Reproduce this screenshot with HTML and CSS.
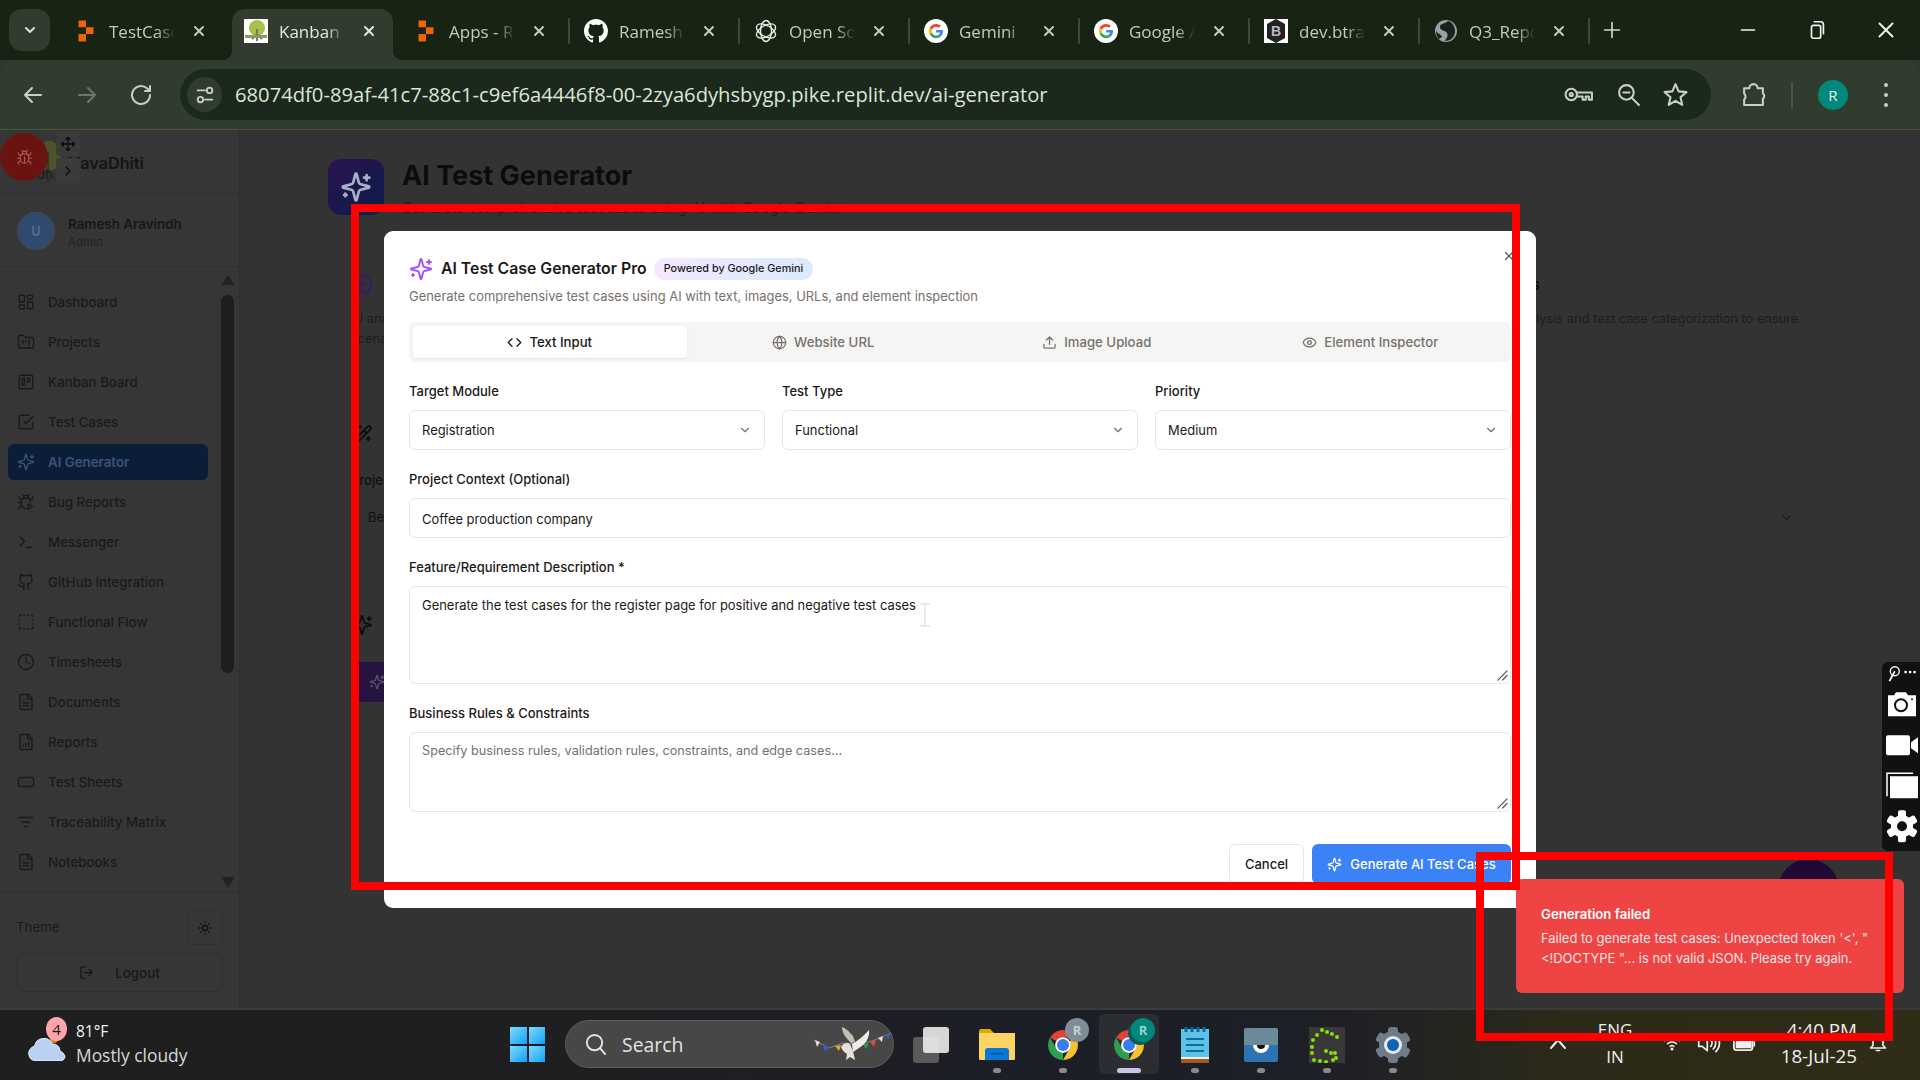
FILE: index.html
```html
<!DOCTYPE html>
<html lang="en">
<head>
    <meta charset="UTF-8">
    <title>AI Test Generator</title>
    <link rel="stylesheet" href="styles.css">
</head>
<body>
    <!-- icon sprite -->
    <svg class="sprite" xmlns="http://www.w3.org/2000/svg">
        <symbol id="i-sparkles" viewBox="0 0 24 24"><path d="M9.937 15.5A2 2 0 0 0 8.5 14.063l-6.135-1.582a.5.5 0 0 1 0-.962L8.5 9.936A2 2 0 0 0 9.937 8.5l1.582-6.135a.5.5 0 0 1 .963 0L14.063 8.5A2 2 0 0 0 15.5 9.937l6.135 1.581a.5.5 0 0 1 0 .964L15.5 14.063a2 2 0 0 0-1.437 1.437l-1.582 6.135a.5.5 0 0 1-.963 0z"/><path d="M20 3v4M22 5h-4M4 17v2M5 18H3"/></symbol>
        <symbol id="i-code" viewBox="0 0 24 24"><path d="m16 18 6-6-6-6M8 6l-6 6 6 6"/></symbol>
        <symbol id="i-globe" viewBox="0 0 24 24"><circle cx="12" cy="12" r="10"/><path d="M12 2a14.5 14.5 0 0 0 0 20 14.5 14.5 0 0 0 0-20M2 12h20"/></symbol>
        <symbol id="i-upload" viewBox="0 0 24 24"><path d="M21 15v4a2 2 0 0 1-2 2H5a2 2 0 0 1-2-2v-4M17 8l-5-5-5 5M12 3v12"/></symbol>
        <symbol id="i-eye" viewBox="0 0 24 24"><path d="M2.062 12.348a1 1 0 0 1 0-.696 10.75 10.75 0 0 1 19.876 0 1 1 0 0 1 0 .696 10.75 10.75 0 0 1-19.876 0"/><circle cx="12" cy="12" r="3"/></symbol>
        <symbol id="i-chevron" viewBox="0 0 24 24"><path d="m6 9 6 6 6-6"/></symbol>
        <symbol id="i-x" viewBox="0 0 24 24"><path d="M18 6 6 18M6 6l12 12"/></symbol>
        <symbol id="i-dashboard" viewBox="0 0 24 24"><rect x="3" y="3" width="7" height="9" rx="1"/><rect x="14" y="3" width="7" height="5" rx="1"/><rect x="14" y="12" width="7" height="9" rx="1"/><rect x="3" y="16" width="7" height="5" rx="1"/></symbol>
        <symbol id="i-folder" viewBox="0 0 24 24"><path d="M4 20h16a2 2 0 0 0 2-2V8a2 2 0 0 0-2-2h-7.93a2 2 0 0 1-1.66-.9l-.82-1.2A2 2 0 0 0 7.93 3H4a2 2 0 0 0-2 2v13c0 1.1.9 2 2 2Z"/><path d="M8 10v4M12 10v2M16 10v6"/></symbol>
        <symbol id="i-kanban" viewBox="0 0 24 24"><rect x="3" y="3" width="18" height="18" rx="2"/><rect x="7" y="7" width="3" height="9"/><rect x="14" y="7" width="3" height="5"/></symbol>
        <symbol id="i-check" viewBox="0 0 24 24"><path d="m9 11 3 3L22 4M21 12v7a2 2 0 0 1-2 2H5a2 2 0 0 1-2-2V5a2 2 0 0 1 2-2h11"/></symbol>
        <symbol id="i-bug" viewBox="0 0 24 24"><path d="m8 2 1.88 1.88M14.12 3.88 16 2M9 7.13v-1a3.003 3.003 0 1 1 6 0v1M12 20c-3.3 0-6-2.7-6-6v-3a4 4 0 0 1 4-4h4a4 4 0 0 1 4 4v3c0 3.3-2.7 6-6 6M12 20v-9M6.53 9C4.6 8.8 3 7.1 3 5M6 13H2M3 21c0-2.1 1.7-3.9 3.8-4M20.97 5c0 2.1-1.6 3.8-3.5 4M22 13h-4M17.2 17c2.1.1 3.8 1.9 3.8 4"/></symbol>
        <symbol id="i-bugplay" viewBox="0 0 24 24"><path d="M12.8 20.8A6 6 0 0 1 6 15v-4a4 4 0 0 1 4-4h4a4 4 0 0 1 4 4v1M8 2l1.88 1.88M14.12 3.88 16 2M9 7.13v-1a3 3 0 1 1 6 0v1M6.53 9C4.6 8.8 3 7.1 3 5M6 13H2M3 21c0-2.1 1.7-3.9 3.8-4M20.97 5c0 2.1-1.6 3.8-3.5 4M15 14.5v7l6-3.5z"/></symbol>
        <symbol id="i-terminal" viewBox="0 0 24 24"><path d="m4 17 6-6-6-6M12 19h8"/></symbol>
        <symbol id="i-github" viewBox="0 0 24 24"><path d="M15 22v-4a4.8 4.8 0 0 0-1-3.5c3 0 6-2 6-5.5.08-1.25-.27-2.48-1-3.5.28-1.15.28-2.35 0-3.5 0 0-1 0-3 1.5-2.64-.5-5.36-.5-8 0C6 2 5 2 5 2c-.3 1.15-.3 2.35 0 3.5A5.403 5.403 0 0 0 4 9c0 3.5 3 5.5 6 5.5-.39.49-.68 1.05-.85 1.65-.17.6-.22 1.23-.15 1.85v4"/><path d="M9 18c-4.51 2-5-2-7-2"/></symbol>
        <symbol id="i-dashed" viewBox="0 0 24 24"><path d="M5 3a2 2 0 0 0-2 2M19 3a2 2 0 0 1 2 2M21 19a2 2 0 0 1-2 2M5 21a2 2 0 0 1-2-2M9 3h1M9 21h1M14 3h1M14 21h1M3 9v1M21 9v1M3 14v1M21 14v1"/></symbol>
        <symbol id="i-clock" viewBox="0 0 24 24"><circle cx="12" cy="12" r="10"/><path d="M12 6v6l4 2"/></symbol>
        <symbol id="i-file" viewBox="0 0 24 24"><path d="M15 2H6a2 2 0 0 0-2 2v16a2 2 0 0 0 2 2h12a2 2 0 0 0 2-2V7Z"/><path d="M14 2v4a2 2 0 0 0 2 2h4M10 9H8M16 13H8M16 17H8"/></symbol>
        <symbol id="i-filechart" viewBox="0 0 24 24"><path d="M15 2H6a2 2 0 0 0-2 2v16a2 2 0 0 0 2 2h12a2 2 0 0 0 2-2V7Z"/><path d="M14 2v4a2 2 0 0 0 2 2h4M8 18v-2M12 18v-4M16 18v-6"/></symbol>
        <symbol id="i-ellipsis" viewBox="0 0 24 24"><rect x="2" y="6" width="20" height="12" rx="2"/><path d="M12 12h.01M17 12h.01M7 12h.01"/></symbol>
        <symbol id="i-filter" viewBox="0 0 24 24"><path d="M3 6h18M7 12h10M10 18h4"/></symbol>
        <symbol id="i-sun" viewBox="0 0 24 24"><circle cx="12" cy="12" r="4"/><path d="M12 3v1M12 20v1M3 12h1M20 12h1M5.6 5.6l.7.7M17.7 17.7l.7.7M5.6 18.4l.7-.7M17.7 6.3l.7-.7"/></symbol>
        <symbol id="i-logout" viewBox="0 0 24 24"><path d="M9 21H5a2 2 0 0 1-2-2V5a2 2 0 0 1 2-2h4M16 17l5-5-5-5M21 12H9"/></symbol>
        <symbol id="i-move" viewBox="0 0 24 24"><path d="M5 9l-3 3 3 3M9 5l3-3 3 3M15 19l-3 3-3-3M19 9l3 3-3 3M2 12h20M12 2v20"/></symbol>
        <symbol id="i-brain" viewBox="0 0 24 24"><path d="M12 5a3 3 0 1 0-5.997.125 4 4 0 0 0-2.526 5.77 4 4 0 0 0 .556 6.588A4 4 0 1 0 12 18ZM12 5a3 3 0 1 1 5.997.125 4 4 0 0 1 2.526 5.77 4 4 0 0 1-.556 6.588A4 4 0 1 1 12 18Z"/><path d="M15 13a4.5 4.5 0 0 1-3-4 4.5 4.5 0 0 1-3 4"/></symbol>
        <symbol id="i-wand" viewBox="0 0 24 24"><path d="m21.64 3.64-1.28-1.28a1.21 1.21 0 0 0-1.72 0L2.36 18.64a1.21 1.21 0 0 0 0 1.72l1.28 1.28a1.2 1.2 0 0 0 1.72 0L21.64 5.36a1.2 1.2 0 0 0 0-1.72M14 7l3 3M5 6v4M19 14v4M10 2v2M7 8H3M21 16h-4M11 3H9"/></symbol>
        <symbol id="i-grip" viewBox="0 0 12 12"><path d="M1 11 11 1M6 11l5-5"/></symbol>
        <symbol id="i-chrome" viewBox="0 0 48 48"><path fill="#db4437" d="M6.68 14A20 20 0 0 1 41.32 14H24a10 10 0 0 0-8.66 5z"/><path fill="#fbc02d" d="M41.32 14A20 20 0 0 1 24 44l8.66-15a10 10 0 0 0 0-10z"/><path fill="#2e9e4f" d="M24 44A20 20 0 0 1 6.68 14l8.66 15A10 10 0 0 0 24 34z"/><circle cx="24" cy="24" r="10.5" fill="#fff"/><circle cx="24" cy="24" r="8" fill="#3b7de8"/></symbol>
        <symbol id="i-google" viewBox="0 0 64 64"><circle cx="32" cy="32" r="32" fill="#fff"/><g transform="translate(13 13) scale(.8)"><path fill="#EA4335" d="M24 9.5c3.54 0 6.71 1.22 9.21 3.6l6.85-6.85C35.9 2.38 30.47 0 24 0 14.62 0 6.51 5.38 2.56 13.22l7.98 6.19C12.43 13.72 17.74 9.5 24 9.5z"/><path fill="#4285F4" d="M46.98 24.55c0-1.57-.15-3.09-.38-4.55H24v9.02h12.94c-.58 2.96-2.26 5.48-4.78 7.18l7.73 6c4.51-4.18 7.09-10.36 7.09-17.65z"/><path fill="#FBBC05" d="M10.53 28.59c-.48-1.45-.76-2.99-.76-4.59s.27-3.14.76-4.59l-7.98-6.19C.92 16.46 0 20.12 0 24c0 3.88.92 7.54 2.56 10.78l7.97-6.19z"/><path fill="#34A853" d="M24 48c6.48 0 11.93-2.13 15.89-5.81l-7.73-6c-2.15 1.45-4.92 2.3-8.16 2.3-6.26 0-11.57-4.22-13.47-9.91l-7.98 6.19C6.51 42.62 14.62 48 24 48z"/></g></symbol>
        <symbol id="i-replit" viewBox="0 0 16 16"><path fill="#f26207" d="M3 1h5v4.5H3zM8 5.5h5V10H8zM3 10h5v5H3z"/></symbol>
    </svg>

    <div class="screen">
        <!-- tab strip -->
        <header class="tabstrip">
            <button class="tab-list"><svg class="ic w3"><use href="#i-chevron"/></svg></button>
            <div class="tabs">
                <div class="tab">
                    <svg class="fav"><use href="#i-replit"/></svg>
                    <span class="tab-title">TestCases</span>
                    <svg class="ic w3 tab-close"><use href="#i-x"/></svg>
                </div>
                <div class="tab active">
                    <svg class="fav" viewBox="0 0 24 24"><rect width="24" height="24" fill="#fff"/><ellipse cx="13" cy="9" rx="8" ry="8" fill="#a9c14a"/><path d="M13 10v12M13 15l-5 5M13 15l5 5" stroke="#777" stroke-width="2"/><rect x="1" y="16" width="22" height="3" fill="#8a9a58"/></svg>
                    <span class="tab-title">Kanban Board</span>
                    <svg class="ic w3 tab-close"><use href="#i-x"/></svg>
                </div>
                <div class="tab">
                    <svg class="fav"><use href="#i-replit"/></svg>
                    <span class="tab-title">Apps - Replit</span>
                    <svg class="ic w3 tab-close"><use href="#i-x"/></svg>
                    <span class="tab-sep"></span>
                </div>
                <div class="tab">
                    <svg class="fav" viewBox="0 0 16 16"><path fill="#fff" d="M8 0C3.58 0 0 3.58 0 8c0 3.54 2.29 6.53 5.47 7.59.4.07.55-.17.55-.38 0-.19-.01-.82-.01-1.49-2.01.37-2.53-.49-2.69-.94-.09-.23-.48-.94-.82-1.13-.28-.15-.68-.52-.01-.53.63-.01 1.08.58 1.23.82.72 1.21 1.87.87 2.33.66.07-.52.28-.87.51-1.07-1.78-.2-3.64-.89-3.64-3.95 0-.87.31-1.59.82-2.15-.08-.2-.36-1.02.08-2.12 0 0 .67-.21 2.2.82.64-.18 1.32-.27 2-.27s1.36.09 2 .27c1.53-1.04 2.2-.82 2.2-.82.44 1.1.16 1.92.08 2.12.51.56.82 1.27.82 2.15 0 3.07-1.87 3.75-3.65 3.95.29.25.54.73.54 1.48 0 1.07-.01 1.93-.01 2.2 0 .21.15.46.55.38A8.013 8.013 0 0 0 16 8c0-4.42-3.58-8-8-8z"/></svg>
                    <span class="tab-title">Ramesh Aravindh</span>
                    <svg class="ic w3 tab-close"><use href="#i-x"/></svg>
                    <span class="tab-sep"></span>
                </div>
                <div class="tab">
                    <svg class="fav" viewBox="0 0 24 24" fill="none" stroke="#e8ebe4" stroke-width="1.4"><ellipse cx="12" cy="12" rx="5.500" ry="10.500"/><ellipse cx="12" cy="12" rx="5.500" ry="10.500" transform="rotate(60 12 12)"/><ellipse cx="12" cy="12" rx="5.500" ry="10.500" transform="rotate(120 12 12)"/></svg>
                    <span class="tab-title">Open Source</span>
                    <svg class="ic w3 tab-close"><use href="#i-x"/></svg>
                    <span class="tab-sep"></span>
                </div>
                <div class="tab">
                    <svg class="fav"><use href="#i-google"/></svg>
                    <span class="tab-title">Gemini</span>
                    <svg class="ic w3 tab-close"><use href="#i-x"/></svg>
                    <span class="tab-sep"></span>
                </div>
                <div class="tab">
                    <svg class="fav"><use href="#i-google"/></svg>
                    <span class="tab-title">Google AI</span>
                    <svg class="ic w3 tab-close"><use href="#i-x"/></svg>
                    <span class="tab-sep"></span>
                </div>
                <div class="tab">
                    <svg class="fav" viewBox="0 0 24 24"><rect width="24" height="24" fill="#fff"/><path fill="#222" d="M12 0l9 5v14l-9 5-9-5V5z"/><text x="12" y="17" text-anchor="middle" font-size="14" font-weight="700" font-family="Liberation Sans" fill="#bbb">B</text></svg>
                    <span class="tab-title">dev.btrak</span>
                    <svg class="ic w3 tab-close"><use href="#i-x"/></svg>
                    <span class="tab-sep"></span>
                </div>
                <div class="tab">
                    <svg class="fav" viewBox="0 0 24 24"><circle cx="12" cy="12" r="11" fill="#9aa0a6"/><path fill="#17241a" d="M14 2c-3 3-8 2-8 6s5 3 7 6-2 7-2 8c6 0 10-4 10-10 0-5-3-9-7-10zM2 12c2 3 5 3 6 6l-3 2c-2-2-3-5-3-8z"/></svg>
                    <span class="tab-title">Q3_Report</span>
                    <svg class="ic w3 tab-close"><use href="#i-x"/></svg>
                    <span class="tab-sep"></span>
                </div>
            </div>
            <svg class="ic new-tab" viewBox="0 0 24 24"><path d="M12 3v18M3 12h18"/></svg>
            <div class="win-controls">
                <span class="win-btn"><svg class="ic win-ic" viewBox="0 0 24 24"><path d="M5 12h14"/></svg></span>
                <span class="win-btn"><svg class="ic win-ic" viewBox="0 0 24 24"><rect x="6" y="7" width="10" height="14" rx="2"/><path d="M9 3h7a3 3 0 0 1 3 3v10"/></svg></span>
                <span class="win-btn"><svg class="ic win-ic x" viewBox="0 0 24 24"><use href="#i-x"/></svg></span>
            </div>
        </header>

        <!-- toolbar -->
        <div class="toolbar">
            <span class="tool-btn"><svg class="ic" viewBox="0 0 24 24"><path d="M20 12H4M11 5l-7 7 7 7"/></svg></span>
            <span class="tool-btn off"><svg class="ic" viewBox="0 0 24 24"><path d="M4 12h16M13 5l7 7-7 7"/></svg></span>
            <span class="tool-btn"><svg class="ic" viewBox="0 0 24 24"><path d="M21 12a9 9 0 1 1-3-6.7L21 8M21 3v5h-5"/></svg></span>
            <div class="omnibox">
                <span class="site-chip"><svg class="ic" viewBox="0 0 24 24"><path d="M4 7h8M12 17h8"/><circle cx="17" cy="7" r="3"/><circle cx="7" cy="17" r="3"/></svg></span>
                <span class="url">68074df0-89af-41c7-88c1-c9ef6a4446f8-00-2zya6dyhsbygp.pike.replit.dev/ai-generator</span>
                <div class="omni-actions">
                    <svg class="ic key" viewBox="0 0 30 24"><circle cx="8" cy="12" r="5.500"/><circle cx="8" cy="12" r="1.500"/><path d="M13.500 10H28v7h-3v-3h-3v3h-3v-3h-5.500"/></svg>
                    <svg class="ic" viewBox="0 0 24 24"><circle cx="10" cy="10" r="7"/><path d="m15 15 7 7M7 10h6"/></svg>
                    <svg class="ic" viewBox="0 0 24 24"><path d="m12 2 3 7 7.500.7-5.700 4.900 1.700 7.400-6.500-3.900-6.500 3.900 1.700-7.400L1.500 9.700 9 9z"/></svg>
                </div>
            </div>
            <svg class="ic ext" viewBox="0 0 24 24"><path d="M3 6h5a4 4 0 0 1 8 0h5v5a3 3 0 0 1 0 5v6H3v-5a4 4 0 0 0 0-6z"/></svg>
            <span class="tool-sep"></span>
            <span class="profile">R</span>
            <span class="dots"><i></i><i></i><i></i></span>
        </div>

        <!-- page behind the dialog -->
        <div class="page">
            <aside class="sidebar">
                <div class="brand">
                    <div class="brand-logo">
                        <svg viewBox="0 0 30 46"><ellipse cx="17" cy="17" rx="12" ry="15" fill="#5c6a22" opacity=".6"/><path d="M16 14v30M16 30l-7 10M16 30l7 10" stroke="#2e2e2e" stroke-width="1.500" fill="none"/></svg>
                        <span class="brand-tag">dh</span>
                    </div>
                    <span class="brand-name">NavaDhiti</span>
                </div>
                <div class="user">
                    <span class="avatar">U</span>
                    <div class="user-text">
                        <div class="user-name">Ramesh Aravindh</div>
                        <div class="user-role">Admin</div>
                    </div>
                </div>
                <div class="nav-wrap">
                    <nav class="nav">
                        <a class="nav-item"><svg class="ic"><use href="#i-dashboard"/></svg>Dashboard</a>
                        <a class="nav-item"><svg class="ic"><use href="#i-folder"/></svg>Projects</a>
                        <a class="nav-item"><svg class="ic"><use href="#i-kanban"/></svg>Kanban Board</a>
                        <a class="nav-item"><svg class="ic"><use href="#i-check"/></svg>Test Cases</a>
                        <a class="nav-item active"><svg class="ic"><use href="#i-sparkles"/></svg>AI Generator</a>
                        <a class="nav-item"><svg class="ic"><use href="#i-bugplay"/></svg>Bug Reports</a>
                        <a class="nav-item"><svg class="ic"><use href="#i-terminal"/></svg>Messenger</a>
                        <a class="nav-item"><svg class="ic"><use href="#i-github"/></svg>GitHub Integration</a>
                        <a class="nav-item"><svg class="ic"><use href="#i-dashed"/></svg>Functional Flow</a>
                        <a class="nav-item"><svg class="ic"><use href="#i-clock"/></svg>Timesheets</a>
                        <a class="nav-item"><svg class="ic"><use href="#i-file"/></svg>Documents</a>
                        <a class="nav-item"><svg class="ic"><use href="#i-filechart"/></svg>Reports</a>
                        <a class="nav-item"><svg class="ic"><use href="#i-ellipsis"/></svg>Test Sheets</a>
                        <a class="nav-item"><svg class="ic"><use href="#i-filter"/></svg>Traceability Matrix</a>
                        <a class="nav-item"><svg class="ic"><use href="#i-file"/></svg>Notebooks</a>
                    </nav>
                    <div class="scrollbar">
                        <span class="arrow up"></span>
                        <span class="thumb"></span>
                        <span class="arrow down"></span>
                    </div>
                </div>
                <div class="side-foot">
                    <div class="theme-row">
                        <span class="theme-label">Theme</span>
                        <span class="theme-btn"><svg class="ic"><use href="#i-sun"/></svg></span>
                    </div>
                    <div class="logout"><svg class="ic"><use href="#i-logout"/></svg>Logout</div>
                </div>
            </aside>

            <main class="main">
                <div class="page-head">
                    <span class="page-icon"><svg class="ic"><use href="#i-sparkles"/></svg></span>
                    <div>
                        <h1>AI Test Generator</h1>
                        <p>Generate comprehensive test cases using AI with Google Gemini</p>
                    </div>
                </div>
                <section class="card card-a">
                    <div class="col">
                        <h3><svg class="ic purple"><use href="#i-brain"/></svg>Smart Analysis</h3>
                        <p>AI analyzes your requirements and generates detailed test<br>scenarios.</p>
                    </div>
                    <div class="col">
                        <h3>Test Types</h3>
                        <p>Functional, integration and regression test coverage.</p>
                    </div>
                    <div class="col">
                        <h3>Coverage and Test Insights</h3>
                        <p>Comprehensive requirement analysis and test case categorization to ensure<br>coverage.</p>
                    </div>
                </section>
                <section class="card card-b">
                    <h3><svg class="ic"><use href="#i-wand"/></svg>Setup</h3>
                    <label>Project</label>
                    <div class="ghost-select">Beginner<svg class="ic"><use href="#i-chevron"/></svg></div>
                </section>
                <section class="card card-c">
                    <h3><svg class="ic"><use href="#i-sparkles"/></svg>AI Test Case Generator</h3>
                    <div class="ghost-btn"><svg class="ic"><use href="#i-sparkles"/></svg>Open Generator</div>
                </section>
            </main>
        </div>

        <!-- taskbar -->
        <footer class="taskbar">
            <div class="weather">
                <div class="weather-ic">
                    <svg viewBox="0 0 38 26"><circle cx="26" cy="4" r="4" fill="#e8811f"/><path d="M8 26a7.500 7.500 0 0 1-1.500-14.800A9.500 9.500 0 0 1 24.500 9 7 7 0 0 1 32 16a9 9 0 0 1 5 5c0 3-2.500 5-5 5z" fill="#b9d2f3" stroke="#e9f1fb"/></svg>
                    <span class="weather-badge">4</span>
                </div>
                <div>
                    <div class="temp">81°F</div>
                    <div class="cond">Mostly cloudy</div>
                </div>
            </div>
            <span class="win-logo"><i></i><i></i><i></i><i></i></span>
            <div class="search">
                <svg class="ic" viewBox="0 0 24 24"><circle cx="11" cy="10" r="8"/><path d="m17 16 5 6"/></svg>
                <span>Search</span>
                <svg class="dove" viewBox="0 0 78 37"><path d="M1 14 16 22 30 17 46 18 62 14 78 7" fill="none" stroke="#aaa" stroke-width=".6"/><path fill="#e8e0d0" d="M2 14l5 2-3 5z"/><path fill="#3b5cc9" d="M10 18l6 3-4 5z"/><path fill="#e4a722" d="M22 20l6-1-2 6z"/><path fill="#2e9e4f" d="M50 18l6-1-3 6z"/><path fill="#d94a3a" d="M57 16l6-2-2 7z"/><path fill="#e8e0d0" d="M65 12l5-2-1 6z"/><path fill="#3b5cc9" d="M72 9l5-2-1 6z"/><path fill="#e6e2da" d="M28 21c2-4 6-5 9-3l3 7 2 9-5-3-4 3 1-6c-3-2-5-4-6-7z"/><path fill="#c4bfb4" d="M38 17C33 12 29 7 29 1c4 2 6 3 8 6 3 2 4 5 5 9z"/><path fill="#efece5" d="M39 18c5-3 12-8 17-14 1 7-3 14-10 18l-6 4z"/></svg>
            </div>
            <div class="apps">
                <div class="app"><span class="task-view"></span></div>
                <div class="app">
                    <svg class="app-ic" viewBox="0 0 36 36"><path fill="#e0a800" d="M0 4a2 2 0 0 1 2-2h9l4 4H0z"/><path fill="#fcd462" d="M0 6h36v26a1 1 0 0 1-1 1H1a1 1 0 0 1-1-1z"/><path fill="#0a78d4" d="M6 24a3 3 0 0 1 3-3h18a3 3 0 0 1 3 3v9H6z"/><path fill="#06589e" d="M12 26h12v1.500H12z"/></svg>
                    <i class="pip"></i>
                </div>
                <div class="app">
                    <span class="chrome"><svg class="app-ic"><use href="#i-chrome"/></svg><b class="chrome-badge">R</b></span>
                    <i class="pip"></i>
                </div>
                <div class="app current">
                    <span class="chrome"><svg class="app-ic"><use href="#i-chrome"/></svg><b class="chrome-badge teal">R</b></span>
                    <i class="pip"></i>
                </div>
                <div class="app">
                    <svg class="app-ic" viewBox="0 0 36 36"><rect x="4" y="31" width="28" height="5" fill="#a8561c"/><rect x="4" y="29" width="28" height="3" fill="#eee"/><rect x="4" y="2" width="28" height="28" fill="#5ec2e8"/><path d="M9 12h18M9 18h18M9 24h18" stroke="#0b6f9c" stroke-width="2"/><path d="M9 0v5M15 0v5M21 0v5M27 0v5" stroke="#0b6f9c" stroke-width="3"/></svg>
                    <i class="pip"></i>
                </div>
                <div class="app">
                    <svg class="app-ic" viewBox="0 0 36 36"><rect x="1" y="1" width="34" height="34" rx="2" fill="#2e74b5"/><path d="M1 3a2 2 0 0 1 2-2h30a2 2 0 0 1 2 2v15H1z" fill="#6a8a99"/><path d="M10 18a8 8 0 0 0 16 0z" fill="#fff"/><path d="M14 18a4 4 0 0 0 8 0z" fill="#111"/></svg>
                    <i class="pip"></i>
                </div>
                <div class="app">
                    <svg class="app-ic" viewBox="0 0 36 36"><rect width="36" height="36" fill="#383838"/><g fill="#86e000"><circle cx="8" cy="8" r="2"/><circle cx="13" cy="3" r="2"/><circle cx="18" cy="5" r="2"/><circle cx="23" cy="7" r="2"/><circle cx="28" cy="10" r="2"/><circle cx="4" cy="13" r="2"/><circle cx="3" cy="20" r="2"/><circle cx="3" cy="26" r="2"/><circle cx="5" cy="33" r="2"/><circle cx="11" cy="34" r="2"/><circle cx="17" cy="35" r="2"/><circle cx="24" cy="33" r="2"/><circle cx="17" cy="24" r="2"/><circle cx="22" cy="26" r="2"/><circle cx="27" cy="31" r="2"/><circle cx="26" cy="26" r="2"/></g></svg>
                    <i class="pip"></i>
                </div>
                <div class="app">
                    <svg class="app-ic" viewBox="0 0 36 36"><g fill="#6f7c88"><circle cx="18" cy="18" r="14"/><rect x="13" y="0" width="10" height="36" rx="3"/><rect x="13" y="0" width="10" height="36" rx="3" transform="rotate(60 18 18)"/><rect x="13" y="0" width="10" height="36" rx="3" transform="rotate(120 18 18)"/></g><circle cx="18" cy="18" r="9" fill="#e6e8ea"/><circle cx="18" cy="18" r="6" fill="#0f62b5"/></svg>
                    <i class="pip"></i>
                </div>
            </div>
            <div class="tray">
                <svg class="ic tray-up" viewBox="0 0 16 10"><path d="m1 9 7-8 7 8"/></svg>
                <div class="lang"><span>ENG</span><span>IN</span></div>
                <svg class="ic wifi" viewBox="0 0 24 20"><path d="M2 7a14 14 0 0 1 20 0M6 11a8.500 8.500 0 0 1 12 0M9.500 14.500a3.500 3.500 0 0 1 5 0"/><circle cx="12" cy="18" r="1" fill="currentColor"/></svg>
                <svg class="ic speaker" viewBox="0 0 28 22"><path d="M2 7h4l6-5v18l-6-5H2zM16 7a6 6 0 0 1 0 8M19 4a10 10 0 0 1 0 14M22 1a14 14 0 0 1 0 20"/></svg>
                <svg class="ic battery" viewBox="0 0 26 18"><rect x="1" y="3" width="21" height="14" rx="3"/><path d="M24 8v4"/><path fill="currentColor" d="M4 14V8l7-5h9v11z"/></svg>
                <div class="clock"><span>4:40 PM</span><span>18-Jul-25</span></div>
                <svg class="ic bell" viewBox="0 0 24 24"><path d="M6 15V10a6 6 0 0 1 12 0v5l3 3H3zM10 21h4"/></svg>
            </div>
        </footer>

        <!-- layers over the page -->
        <span class="bug-btn"><svg class="ic"><use href="#i-bug"/></svg></span>
        <span class="float-btn move"><svg class="ic"><use href="#i-move"/></svg></span>
        <span class="float-btn next"><svg class="ic" viewBox="0 0 24 24"><path d="m9 6 6 6-6 6"/></svg></span>

        <div class="fab"></div>

        <div class="modal">
            <svg class="ic modal-close"><use href="#i-x"/></svg>
            <div class="modal-head">
                <svg class="ic modal-spark"><use href="#i-sparkles"/></svg>
                <h2>AI Test Case Generator Pro</h2>
                <span class="powered">Powered by Google Gemini</span>
            </div>
            <p class="modal-sub">Generate comprehensive test cases using AI with text, images, URLs, and element inspection</p>

            <div class="modal-tabs">
                <button class="m-tab on"><svg class="ic"><use href="#i-code"/></svg>Text Input</button>
                <button class="m-tab"><svg class="ic"><use href="#i-globe"/></svg>Website URL</button>
                <button class="m-tab"><svg class="ic"><use href="#i-upload"/></svg>Image Upload</button>
                <button class="m-tab"><svg class="ic"><use href="#i-eye"/></svg>Element Inspector</button>
            </div>

            <div class="field-row">
                <div>
                    <label class="f-label">Target Module</label>
                    <div class="f-select">Registration<svg class="ic"><use href="#i-chevron"/></svg></div>
                </div>
                <div>
                    <label class="f-label">Test Type</label>
                    <div class="f-select">Functional<svg class="ic"><use href="#i-chevron"/></svg></div>
                </div>
                <div>
                    <label class="f-label">Priority</label>
                    <div class="f-select">Medium<svg class="ic"><use href="#i-chevron"/></svg></div>
                </div>
            </div>

            <div class="field">
                <label class="f-label" for="ctx">Project Context (Optional)</label>
                <input id="ctx" class="f-input" value="Coffee production company">
            </div>
            <div class="field">
                <label class="f-label" for="desc">Feature/Requirement Description *</label>
                <div class="area-wrap">
                    <textarea id="desc" class="f-input f-area tall">Generate the test cases for the register page for positive and negative test cases</textarea>
                    <svg class="ic grip"><use href="#i-grip"/></svg>
                </div>
            </div>
            <div class="field">
                <label class="f-label" for="rules">Business Rules &amp; Constraints</label>
                <div class="area-wrap">
                    <textarea id="rules" class="f-input f-area" placeholder="Specify business rules, validation rules, constraints, and edge cases..."></textarea>
                    <svg class="ic grip"><use href="#i-grip"/></svg>
                </div>
            </div>

            <div class="modal-foot">
                <button class="btn-cancel">Cancel</button>
                <button class="btn-generate"><svg class="ic"><use href="#i-sparkles"/></svg>Generate AI Test Cases</button>
            </div>
            <svg class="ibeam" viewBox="0 0 14 24"><path d="M2 1h10M2 23h10M7 1v22"/></svg>
        </div>

        <div class="toast">
            <div class="toast-title">Generation failed</div>
            <div class="toast-body">Failed to generate test cases: Unexpected token '&lt;', "<br>&lt;!DOCTYPE "... is not valid JSON. Please try again.</div>
        </div>

        <div class="capture-panel">
            <svg class="cap-top" viewBox="0 0 32 20"><circle cx="8" cy="8" r="5" fill="none" stroke="#fff" stroke-width="1.500"/><path d="M2 19 8 8" stroke="#fff" stroke-width="2"/><circle cx="20" cy="9" r="1.500" fill="#fff"/><circle cx="25" cy="9" r="1.500" fill="#fff"/><circle cx="30" cy="9" r="1.500" fill="#fff"/></svg>
            <svg viewBox="0 0 32 24"><path fill="#fff" d="M2 3h6l2-3h10l2 3h8v21H2z"/><circle cx="15" cy="13" r="6" fill="none" stroke="#111" stroke-width="2"/><circle cx="26" cy="7" r="1" fill="#111"/></svg>
            <svg viewBox="0 0 32 22"><rect y="1" width="24" height="20" rx="2" fill="#fff"/><path fill="#fff" d="M25 8l7-5v16l-7-5z"/></svg>
            <svg viewBox="0 0 32 26"><path fill="none" stroke="#fff" stroke-width="1.500" d="M1 24V1h26"/><rect x="4" y="4" width="28" height="22" fill="#fff"/></svg>
            <svg viewBox="0 0 32 32"><g fill="#fff"><circle cx="16" cy="16" r="11"/><rect x="12" y="0" width="8" height="32" rx="2"/><rect x="12" y="0" width="8" height="32" rx="2" transform="rotate(60 16 16)"/><rect x="12" y="0" width="8" height="32" rx="2" transform="rotate(120 16 16)"/></g><circle cx="16" cy="16" r="5" fill="#111"/></svg>
        </div>

        <!-- red annotation boxes -->
        <div class="mark mark-form"></div>
        <div class="mark mark-toast"></div>
    </div>
</body>
</html>
```

FILE: styles.css
```css
/* general */
* {
    box-sizing: border-box;
}

html, body {
    margin: 0;
    padding: 0;
    overflow: hidden;
}

body {
    font-family: Inter, "Liberation Sans", sans-serif;
    background: #333;
}

.sprite {
    display: none;
}

.ic {
    fill: none;
    stroke: currentColor;
    stroke-width: 2;
    stroke-linecap: round;
    stroke-linejoin: round;
    flex: none;
}

.w3 {
    stroke-width: 3;
}

button {
    font-family: inherit;
    border: 0;
    padding: 0;
    background: none;
}

.screen {
    position: relative;
    width: 1920px;
    height: 1080px;
    display: flex;
    flex-direction: column;
    overflow: hidden;
}

/* browser tabs */
.tabstrip {
    height: 60px;
    background: #172414;
    display: flex;
    flex: none;
    color: #c3cbbf;
    font-family: "Open Sans", sans-serif;
}

.tab-list {
    width: 41px;
    height: 42px;
    margin: 9px 0 0 9px;
    border-radius: 13px;
    background: #303c2e;
    color: #d9e0d4;
    display: flex;
    align-items: center;
    justify-content: center;
}

.tab-list svg {
    width: 16px;
    height: 16px;
}

.tabs {
    display: flex;
    margin-left: 12px;
}

.tab {
    position: relative;
    width: 170px;
    height: 51px;
    margin-top: 9px;
    padding: 0 0 8px 12px;
    display: flex;
    align-items: center;
}

.tab.active {
    width: 161px;
    margin-right: 9px;
    background: #303c2e;
    border-radius: 13px 13px 0 0;
    color: #e3e9de;
}

.tab.active::before,
.tab.active::after {
    content: "";
    position: absolute;
    bottom: 0;
    width: 10px;
    height: 10px;
}

.tab.active::before {
    left: -10px;
    background: radial-gradient(circle at 0 0, transparent 10px, #303c2e 10.5px);
}

.tab.active::after {
    right: -10px;
    background: radial-gradient(circle at 100% 0, transparent 10px, #303c2e 10.5px);
}

.fav {
    width: 24px;
    height: 24px;
    flex: none;
}

.tab-title {
    width: 66px;
    margin: 2px 0 0 11px;
    font-size: 17px;
    white-space: nowrap;
    overflow: hidden;
    -webkit-mask-image: linear-gradient(90deg, #000 72%, transparent);
    mask-image: linear-gradient(90deg, #000 72%, transparent);
}

.tab-close {
    width: 16px;
    height: 16px;
    margin-left: 16px;
}

.tab-sep {
    width: 2px;
    height: 26px;
    margin-left: auto;
    margin-right: 2px;
    background: #3c483a;
}

.new-tab {
    width: 20px;
    height: 20px;
    margin: 20px 0 0 10px;
    color: #d0d7cb;
}

.win-controls {
    margin-left: auto;
    display: flex;
    color: #f2f4ef;
}

.win-btn {
    width: 69px;
    height: 60px;
    display: flex;
    align-items: center;
    justify-content: center;
}

.win-ic {
    width: 22px;
    height: 22px;
    stroke-width: 1.8;
}

.win-ic.x {
    width: 26px;
    height: 26px;
}

/* browser toolbar */
.toolbar {
    height: 70px;
    flex: none;
    padding-left: 6px;
    background: #303c2e;
    border-radius: 12px 12px 0 0;
    border-bottom: 1px solid #46573f;
    display: flex;
    align-items: center;
    color: #c8d0c3;
    font-family: "Open Sans", sans-serif;
}

.tool-btn {
    width: 54px;
    display: flex;
    justify-content: center;
}

.tool-btn svg {
    width: 24px;
    height: 24px;
}

.tool-btn.off {
    color: #6c7868;
}

.omnibox {
    width: 1531px;
    height: 51px;
    margin-left: 12px;
    padding: 0 23px 0 7px;
    border-radius: 26px;
    background: #1b281c;
    display: flex;
    align-items: center;
}

.site-chip {
    width: 35px;
    height: 35px;
    border-radius: 50%;
    background: #303c2e;
    display: flex;
    align-items: center;
    justify-content: center;
}

.site-chip svg {
    width: 22px;
    height: 22px;
}

.url {
    margin: 0 0 2px 13px;
    font-size: 20.2px;
    color: #dde4d8;
    white-space: nowrap;
}

.omni-actions {
    margin-left: auto;
    display: flex;
    align-items: center;
    gap: 22px;
}

.omni-actions svg {
    width: 25px;
    height: 25px;
}

.omni-actions .key {
    width: 31px;
    height: 25px;
}

.ext {
    width: 25px;
    height: 25px;
    margin-left: 30px;
}

.tool-sep {
    width: 2px;
    height: 26px;
    margin-left: 25px;
    background: #4a5747;
}

.profile {
    width: 30px;
    height: 30px;
    margin-left: 25px;
    border-radius: 50%;
    background: #00897b;
    color: #e4f3ee;
    font-size: 15px;
    display: flex;
    align-items: center;
    justify-content: center;
}

.dots {
    margin-left: 36px;
    display: flex;
    flex-direction: column;
    gap: 6px;
}

.dots i {
    width: 4px;
    height: 4px;
    border-radius: 50%;
    background: #c8d0c3;
}

/* dimmed page */
.page {
    flex: 1;
    display: flex;
    min-height: 0;
    background: #333;
}

.sidebar {
    width: 240px;
    flex: none;
    display: flex;
    flex-direction: column;
    background: #363636;
    border-right: 1px solid #2f2f2f;
    color: #1a1a1a;
}

.brand {
    height: 64px;
    flex: none;
    padding-left: 32px;
    border-bottom: 1px solid #2f2f2f;
    display: flex;
    align-items: center;
}

.brand-logo {
    position: relative;
    width: 30px;
    height: 46px;
}

.brand-logo svg {
    width: 30px;
    height: 46px;
    display: block;
}

.brand-tag {
    position: absolute;
    left: 5px;
    top: 27px;
    font-size: 13px;
    color: #1d1d1d;
}

.brand-name {
    margin: 2px 0 0 6px;
    font-size: 16.2px;
    font-weight: 600;
    color: #141414;
}

.user {
    height: 73px;
    flex: none;
    padding-left: 17px;
    border-bottom: 1px solid #2f2f2f;
    display: flex;
    align-items: center;
    gap: 13px;
}

.avatar {
    width: 38px;
    height: 38px;
    margin-top: 2px;
    border-radius: 50%;
    background: #2f4a6e;
    border: 2px solid #3c4956;
    color: #4d6a90;
    font-size: 13px;
    font-weight: 700;
    display: flex;
    align-items: center;
    justify-content: center;
}

.user-text {
    margin-top: 5px;
}

.user-name {
    font-size: 13.4px;
    font-weight: 600;
    line-height: 18px;
    color: #171717;
}

.user-role {
    font-size: 11.6px;
    line-height: 18px;
    color: #222;
}

.nav-wrap {
    flex: 1;
    min-height: 0;
    display: flex;
    padding-left: 8px;
}

.nav {
    width: 200px;
    padding-top: 17px;
    display: flex;
    flex-direction: column;
    gap: 4px;
}

.nav-item {
    height: 36px;
    padding-left: 9px;
    border-radius: 6px;
    display: flex;
    align-items: center;
    gap: 13px;
    font-size: 13.3px;
    font-weight: 500;
    color: #1a1a1a;
}

.nav-item svg {
    width: 18px;
    height: 18px;
    stroke-width: 1.8;
}

.nav-item.active {
    background: #0c1d38;
    color: #3c5478;
    font-weight: 600;
}

.scrollbar {
    width: 13px;
    margin-left: 13px;
    padding: 8px 0 4px;
    display: flex;
    flex-direction: column;
    align-items: center;
}

.arrow {
    width: 0;
    height: 0;
    border-left: 7px solid transparent;
    border-right: 7px solid transparent;
}

.arrow.up {
    border-bottom: 10px solid #222;
}

.arrow.down {
    margin-top: auto;
    border-top: 11px solid #222;
}

.thumb {
    width: 13px;
    height: 378px;
    margin-top: 10px;
    border-radius: 7px;
    background: #1e1e1e;
}

.side-foot {
    flex: none;
    height: 116px;
    padding: 17px 16px 0;
    border-top: 1px solid #2f2f2f;
}

.theme-row {
    display: flex;
    align-items: center;
    justify-content: space-between;
    font-size: 13.3px;
    color: #1a1a1a;
}

.theme-label {
    margin-bottom: 2px;
}

.theme-btn {
    width: 36px;
    height: 35px;
    border: 1px solid #303030;
    border-radius: 6px;
    display: flex;
    align-items: center;
    justify-content: center;
    color: #0f0f0f;
}

.theme-btn svg {
    width: 16px;
    height: 16px;
}

.logout {
    height: 39px;
    margin-top: 8px;
    border: 1px solid #303030;
    border-radius: 6px;
    display: flex;
    align-items: center;
    justify-content: center;
    gap: 21px;
    font-size: 13.3px;
    font-weight: 500;
    color: #171717;
}

.logout svg {
    width: 15px;
    height: 15px;
}

.main {
    flex: 1;
    padding: 29px 88px 0;
    color: #151515;
}

.page-head {
    display: flex;
    gap: 18px;
}

.page-icon {
    width: 56px;
    height: 56px;
    border-radius: 13px;
    background: linear-gradient(135deg, #2b124e, #0a1d4d);
    color: #a9afc5;
    display: flex;
    align-items: center;
    justify-content: center;
}

.page-icon svg {
    width: 32px;
    height: 32px;
}

.page-head h1 {
    margin: -1px 0 0;
    font-size: 27px;
    line-height: 36px;
    font-weight: 700;
    color: #0c0c0c;
}

.page-head p {
    margin: 5px 0 0;
    font-size: 14.4px;
    line-height: 18px;
    color: #1e1e1e;
}

.card {
    width: 1504px;
    padding-left: 22px;
    padding-right: 22px;
    border: 1px solid #2f3130;
    border-radius: 10px;
}

.card h3 {
    margin: 0;
    height: 22px;
    font-size: 15.3px;
    font-weight: 600;
    display: flex;
    align-items: center;
    gap: 10px;
    color: #0e0e0e;
    white-space: nowrap;
}

.card h3 svg {
    width: 22px;
    height: 22px;
}

.purple {
    color: #3a1a6a;
}

.card-a {
    height: 129px;
    margin-top: 28px;
    padding-top: 27px;
    display: grid;
    grid-template-columns: repeat(3, 1fr);
    gap: 24px;
}

.card-a p {
    margin: 14px 0 0;
    font-size: 12.8px;
    line-height: 20px;
    color: #1d1d1d;
    white-space: nowrap;
}

.card-b {
    height: 165px;
    margin-top: 25px;
    padding-top: 24px;
}

.card-b label {
    display: block;
    margin-top: 25px;
    font-size: 13px;
    font-weight: 500;
    line-height: 18px;
    color: #111;
}

.ghost-select {
    height: 40px;
    margin-top: 8px;
    padding: 0 14px 0 16px;
    border: 1px solid #2f3130;
    border-radius: 6px;
    display: flex;
    align-items: center;
    justify-content: space-between;
    font-size: 13px;
    color: #111;
}

.ghost-select svg {
    width: 15px;
    height: 15px;
    color: #1d1d1d;
}

.card-c {
    height: 136px;
    margin-top: 26px;
    padding-top: 23px;
}

.ghost-btn {
    width: 300px;
    height: 40px;
    margin-top: 26px;
    padding-left: 18px;
    border-radius: 6px;
    background: linear-gradient(90deg, #271240, #14203f);
    display: flex;
    align-items: center;
    gap: 10px;
    color: #5b4f70;
    font-size: 12.6px;
}

.ghost-btn svg {
    width: 16px;
    height: 16px;
}

/* windows taskbar */
.taskbar {
    height: 72px;
    flex: none;
    padding-top: 2px;
    border-top: 2px solid #3b3b3b;
    background: linear-gradient(90deg, #1f1f1f 0%, #1f1f21 30%, #1c1e28 58%, #1e2026 70%, #2c2a18 82%, #2f2c17 100%);
    display: flex;
    color: #f1f1f1;
    font-family: "Open Sans", sans-serif;
}

.weather {
    width: 510px;
    flex: none;
    padding-left: 28px;
    display: flex;
    align-items: center;
}

.weather-ic {
    position: relative;
    width: 38px;
    height: 40px;
    margin-right: 10px;
}

.weather-ic svg {
    position: absolute;
    left: 0;
    bottom: 5px;
    width: 38px;
    height: 26px;
}

.weather-badge {
    position: absolute;
    left: 18px;
    top: -9px;
    width: 21px;
    height: 24px;
    border-radius: 50%;
    background: #ffa3ad;
    color: #1a1a1a;
    font-size: 15px;
    line-height: 24px;
    text-align: center;
}

.temp {
    margin-top: -4px;
    font-size: 15.5px;
    line-height: 22px;
}

.cond {
    font-size: 17.4px;
    line-height: 26px;
    color: #d7d7d7;
}

.win-logo {
    width: 35px;
    height: 35px;
    margin: 15px 20px 0 0;
    flex: none;
    display: grid;
    grid-template-columns: 1fr 1fr;
    gap: 2px;
}

.win-logo i {
    background: linear-gradient(135deg, #7fdcff, #10a0f5);
}

.search {
    width: 329px;
    height: 48px;
    margin-top: 8px;
    padding: 0 2px 0 18px;
    flex: none;
    border-radius: 24px;
    border: 1px solid #5e5e5e;
    background: #474747;
    display: flex;
    align-items: center;
    font-size: 19.4px;
    color: #e3e3e3;
}

.search > .ic {
    width: 23px;
    height: 23px;
    margin-right: 15px;
}

.dove {
    width: 78px;
    height: 37px;
    margin-left: auto;
}

.apps {
    margin-left: 4px;
    display: flex;
}

.app {
    width: 60px;
    height: 60px;
    margin: 2px 3px 0;
    padding-top: 13px;
    border-radius: 6px;
    display: flex;
    flex-direction: column;
    align-items: center;
}

.app.current {
    background: #2c2d33;
}

.app-ic {
    width: 36px;
    height: 36px;
    display: block;
}

.pip {
    width: 8px;
    height: 5px;
    margin-top: 5px;
    border-radius: 3px;
    background: #8a8a8a;
}

.current .pip {
    width: 24px;
    background: #c9c4e8;
}

.task-view {
    position: relative;
    width: 36px;
    height: 36px;
}

.task-view::before,
.task-view::after {
    content: "";
    position: absolute;
    border-radius: 3px;
}

.task-view::before {
    left: 0;
    top: 10px;
    width: 26px;
    height: 26px;
    background: #5a5a5c;
}

.task-view::after {
    right: 0;
    top: 0;
    width: 26px;
    height: 26px;
    background: rgba(240, 240, 240, .88);
}

.chrome {
    position: relative;
    display: block;
    width: 36px;
    height: 36px;
}

.chrome-badge {
    position: absolute;
    right: -8px;
    top: -9px;
    width: 24px;
    height: 24px;
    border-radius: 50%;
    background: #7e8d96;
    color: #c4d0d6;
    font-size: 13px;
    line-height: 24px;
    text-align: center;
}

.chrome-badge.teal {
    background: #00897b;
    color: #9fd3ca;
    box-shadow: -3px 3px 0 #0a5f55;
}

.tray {
    margin-left: auto;
    padding: 0 32px 6px 0;
    display: flex;
    align-items: center;
    color: #eee;
}

.tray-up {
    width: 16px;
    height: 10px;
    margin-top: 2px;
}

.lang {
    width: 40px;
    margin-left: 29px;
    display: flex;
    flex-direction: column;
    align-items: center;
    font-size: 17px;
    line-height: 27px;
}

.wifi {
    width: 18px;
    height: 16px;
    margin-left: 28px;
}

.speaker {
    width: 24px;
    height: 20px;
    margin-left: 16px;
}

.battery {
    width: 23px;
    height: 16px;
    margin-left: 12px;
}

.clock {
    width: 84px;
    margin-left: 17px;
    display: flex;
    flex-direction: column;
    align-items: flex-end;
    font-size: 18.8px;
    line-height: 26px;
    white-space: nowrap;
}

.bell {
    width: 20px;
    height: 20px;
    margin-left: 11px;
}

/* overlays */
.bug-btn {
    position: absolute;
    left: 0;
    top: 133px;
    width: 48px;
    height: 48px;
    border-radius: 50%;
    background: #6b1311;
    color: #a85f58;
    display: flex;
    align-items: center;
    justify-content: center;
}

.bug-btn svg {
    width: 17px;
    height: 17px;
    stroke-width: 1.5;
}

.float-btn {
    position: absolute;
    left: 56px;
    width: 24px;
    height: 25px;
    border-radius: 4px;
    background: #3b3b3b;
    color: #0c0c0c;
    display: flex;
    align-items: center;
    justify-content: center;
}

.float-btn svg {
    width: 16px;
    height: 16px;
}

.float-btn.move {
    top: 131px;
}

.float-btn.next {
    top: 158px;
}

.fab {
    position: absolute;
    left: 1778px;
    top: 859px;
    width: 61px;
    height: 61px;
    border-radius: 50%;
    background: #1f0a36;
}

/* dialog */
.modal {
    position: absolute;
    left: 384px;
    top: 231px;
    width: 1152px;
    height: 677px;
    padding: 27px 25px 0;
    background: #fff;
    border-radius: 9px;
    overflow: hidden;
    color: #1c1917;
}

.modal-close {
    position: absolute;
    right: 20px;
    top: 18px;
    width: 14px;
    height: 14px;
    color: #57534e;
}

.modal-head {
    display: flex;
    align-items: center;
    height: 22px;
}

.modal-spark {
    width: 24px;
    height: 24px;
    color: #a855f7;
}

.modal-head h2 {
    margin: 0 0 0 8px;
    font-size: 15.8px;
    font-weight: 600;
    line-height: 22px;
}

.powered {
    height: 22px;
    margin-left: 7px;
    padding: 0 10px;
    border-radius: 11px;
    background: linear-gradient(90deg, #f3e8ff, #dbeafe);
    font-size: 10.8px;
    font-weight: 500;
    line-height: 22px;
    color: #1c1917;
}

.modal-sub {
    margin: 7px 0 0;
    font-size: 12.95px;
    line-height: 18px;
    color: #78716c;
}

.modal-tabs {
    height: 40px;
    margin-top: 17px;
    padding: 4px;
    border-radius: 6px;
    background: #f5f5f4;
    display: grid;
    grid-template-columns: repeat(4, 1fr);
}

.m-tab {
    border-radius: 4px;
    display: flex;
    align-items: center;
    justify-content: center;
    gap: 7px;
    font-size: 13.2px;
    font-weight: 500;
    color: #78716c;
}

.m-tab svg {
    width: 15px;
    height: 15px;
}

.m-tab.on {
    background: #fff;
    color: #1c1917;
    box-shadow: 0 1px 2px rgba(0, 0, 0, .08);
}

.field-row {
    margin-top: 20px;
    display: grid;
    grid-template-columns: repeat(3, 1fr);
    gap: 17px;
}

.field {
    margin-top: 20px;
}

.f-label {
    display: block;
    margin-bottom: 10px;
    font-size: 13px;
    font-weight: 500;
    line-height: 18px;
}

.f-select,
.f-input {
    width: 100%;
    height: 40px;
    padding: 0 12px;
    border: 1px solid #e7e5e4;
    border-radius: 6px;
    background: #fff;
    font-family: inherit;
    font-size: 12.95px;
    color: #1c1917;
}

.f-select {
    display: flex;
    align-items: center;
    justify-content: space-between;
}

.f-select svg {
    width: 14px;
    height: 14px;
    color: #78716c;
}

.f-input {
    display: block;
    outline: none;
    padding-top: 2px;
}

.area-wrap {
    position: relative;
}

.f-area {
    height: 80px;
    padding-top: 9px;
    line-height: 18px;
    resize: none;
}

.f-area.tall {
    height: 98px;
}

.f-input::placeholder {
    color: #78716c;
    font-size: 12.7px;
}

.grip {
    position: absolute;
    right: 3px;
    bottom: 3px;
    width: 11px;
    height: 11px;
    color: #55524f;
    stroke-width: 1.3;
}

.modal-foot {
    margin-top: 32px;
    display: flex;
    justify-content: flex-end;
    gap: 8px;
}

.modal-foot button {
    height: 40px;
    border-radius: 6px;
    font-size: 13px;
    font-weight: 500;
}

.btn-cancel {
    width: 75px;
    border: 1px solid #e7e5e4;
    color: #1c1917;
}

.btn-generate {
    width: 199px;
    background: #3b82f6;
    color: #fff;
    display: flex;
    align-items: center;
    justify-content: center;
    gap: 8px;
}

.btn-generate svg {
    width: 15px;
    height: 15px;
}

.ibeam {
    position: absolute;
    left: 534px;
    top: 372px;
    width: 14px;
    height: 24px;
    fill: none;
    stroke: #e4e4e4;
    stroke-width: 1.5;
}

/* toast */
.toast {
    position: absolute;
    left: 1516px;
    top: 879px;
    width: 388px;
    height: 114px;
    padding: 25px;
    border-radius: 6px;
    background: #ef4444;
    color: #fff;
}

.toast-title {
    font-size: 13.2px;
    font-weight: 600;
    line-height: 20px;
}

.toast-body {
    margin-top: 4px;
    font-size: 12.95px;
    line-height: 20px;
    color: #fde3e3;
    white-space: nowrap;
}

/* capture tool on the right edge */
.capture-panel {
    position: absolute;
    right: 0;
    top: 662px;
    width: 38px;
    height: 189px;
    padding: 2px 0 0 4px;
    border-radius: 6px 0 0 6px;
    background: #111;
    display: flex;
    flex-direction: column;
}

.capture-panel svg {
    width: 32px;
    height: 40.5px;
    flex: none;
}

.capture-panel .cap-top {
    height: 18px;
    margin-bottom: 2px;
}

/* annotations */
.mark {
    position: absolute;
    border: 8px solid #f00;
}

.mark-form {
    left: 351px;
    top: 204px;
    width: 1169px;
    height: 686px;
}

.mark-toast {
    left: 1476px;
    top: 852px;
    width: 417px;
    height: 189px;
}
```
